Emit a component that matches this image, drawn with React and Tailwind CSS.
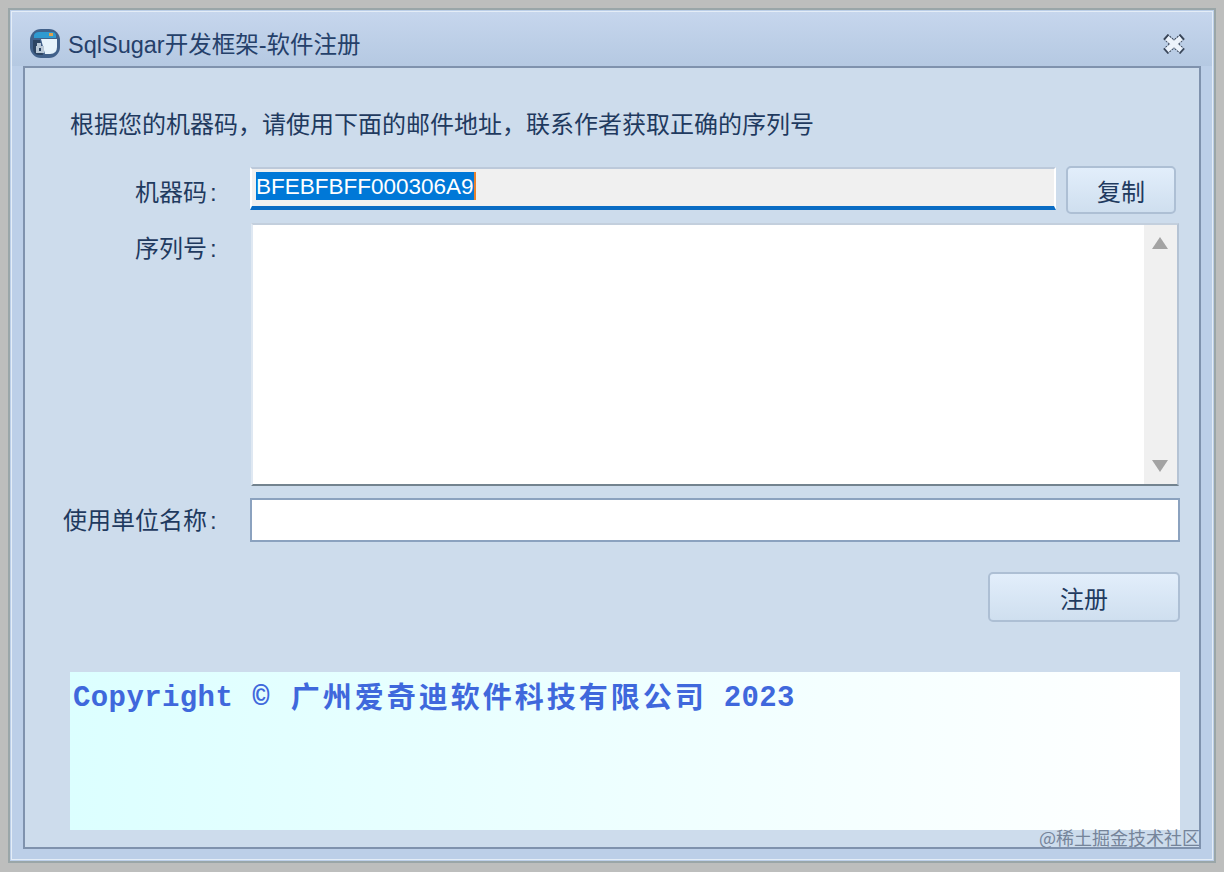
import React from "react";

const cjk = "font-['Liberation_Sans','Noto_Sans_CJK_SC',sans-serif]";

const AppIcon = () => (
  <svg width="32" height="31" viewBox="0 0 32 31" className="mb-[6px] blur-[0.5px]">
    <rect x="1" y="1" width="30" height="29" rx="11" fill="#41618a" />
    <path d="M5 7 Q6 4 10 4 H23 Q27 4 27 8 V10 H5 Z" fill="#2f9ad0" />
    <rect x="20" y="5" width="4" height="3" fill="#dfa24e" />
    <path d="M12 11 H28 V19 Q28 26 21 26 H16 Z" fill="#e6f3fb" />
    <path d="M4 12 H11 L14 27 H9 Q4 26 4 20 Z" fill="#2c4462" />
    <path d="M8 15 H12 V18 H15 V25 H7 V18 H8 Z" fill="#b9c8d6" />
    <rect x="10" y="20" width="2" height="3" fill="#2c4462" />
  </svg>
);

const CloseIcon = () => (
  <svg width="24" height="20" viewBox="0 0 24 20" className="mb-[4px]">
    <path
      d="M3.5 2.5 L20.5 17.5 M20.5 2.5 L3.5 17.5"
      stroke="#3a4658"
      strokeWidth="7"
      strokeDasharray="2 1"
      fill="none"
    />
    <path d="M5 4 L19 16 M19 4 L5 16" stroke="#edf3fb" strokeWidth="5" fill="none" />
  </svg>
);

const Button = ({ className, children }) => (
  <button
    className={`rounded-[5px] border-2 border-[#adbfd4] bg-linear-to-b from-[#e2eefb] to-[#cfdfef] pt-[6px] text-[24px] text-[#1f3a5f] ${cjk} ${className}`}
  >
    {children}
  </button>
);

const Label = ({ children, className }) => (
  <div
    className={`w-[225px] shrink-0 pr-[32px] text-right text-[24px] leading-[32px] text-[#1f3a5f] ${cjk} ${className}`}
  >
    {children}
    <span className="inline-block w-[11px] pl-[3px] text-left">:</span>
  </div>
);

export default function App() {
  return (
    <div className="h-[872px] w-[1224px] overflow-hidden bg-[#bdbebd] pt-[8px] pl-[8px]">
      <div className="relative h-[855px] w-[1208px] border-2 border-[#9aa6a8] bg-[#bccfe8] p-[1px]">
        <div className="h-full border border-[#e4edf7]">
          {/* title bar */}
          <div className="flex h-[54px] items-center justify-between bg-linear-to-b from-[#c6d6ed] to-[#b5c9e2] pt-[14px] pr-[26px] pl-[17px]">
            <div className="flex items-center gap-[7px]">
              <AppIcon />
              <span className={`text-[23.5px] text-[#25406a] ${cjk}`}>SqlSugar开发框架-软件注册</span>
            </div>
            <CloseIcon />
          </div>

          {/* panel */}
          <div className="mx-[11px] flex h-[783px] flex-col border-2 border-[#7f92ad] bg-[#cddcec]">
            <div className={`mt-[41px] pl-[45px] text-[24px] leading-[32px] text-[#1f3a5f] ${cjk}`}>
              根据您的机器码，请使用下面的邮件地址，联系作者获取正确的序列号
            </div>

            <div className="mt-[25px] flex items-start">
              <Label className="mt-[11px]">机器码</Label>
              <div className="mt-[1px] flex h-[43px] w-[806px] items-start border-x-2 border-t-2 border-b-[4px] border-x-white border-t-[#bcc9da] border-b-[#0a6cc4] bg-[#f0f0f0] pt-[3px] pl-[4px]">
                <span className="h-[28px] border-r-2 border-[#e8822e] bg-[#0078d7] font-['Liberation_Sans',sans-serif] text-[22.5px] leading-[30px] text-white">
                  BFEBFBFF000306A9
                </span>
              </div>
              <Button className="ml-[10px] h-[48px] w-[110px]">复制</Button>
            </div>

            <div className="mt-[9px] flex items-start">
              <Label className="mt-[10px]">序列号</Label>
              <div className="ml-[1px] flex h-[263px] w-[928px] border-t-2 border-r-2 border-b-2 border-l-2 border-t-[#c3cfdd] border-r-[#b5c3d4] border-b-[#73838f] border-l-[#dfe8f2] bg-white">
                <div className="flex-1" />
                <div className="flex w-[33px] flex-col items-center justify-between bg-[#f0f0f0] py-[12px] pr-[2px]">
                  <div className="h-0 w-0 border-x-[8px] border-b-[12px] border-x-transparent border-b-[#a3a3a3]" />
                  <div className="h-0 w-0 border-x-[8px] border-t-[12px] border-x-transparent border-t-[#a3a3a3]" />
                </div>
              </div>
            </div>

            <div className="mt-[12px] flex items-center">
              <Label className="pt-[2px]">使用单位名称</Label>
              <div className="h-[44px] w-[930px] border-2 border-[#8ba2bf] bg-white" />
            </div>

            <div className="mt-[30px] flex justify-end pr-[19px]">
              <Button className="h-[50px] w-[192px]">注册</Button>
            </div>

            <div className="mt-[50px] ml-[45px] h-[158px] w-[1110px] bg-linear-to-r from-[#dcffff] to-white pt-[5px] pl-[3px] text-[#3f68dc]">
              <div className="flex items-center whitespace-nowrap font-bold">
                <span className="font-['Liberation_Mono',monospace] text-[29px] leading-[36px] tracking-[0.4px]">
                  Copyright
                </span>
                <span className="ml-[19px] font-['Liberation_Mono',monospace] text-[29px] leading-[36px]">©</span>
                <span className="ml-[21px] pb-[8px] font-['Noto_Sans_CJK_SC',sans-serif] text-[29px] leading-[36px] tracking-[3px]">
                  广州爱奇迪软件科技有限公司
                </span>
                <span className="ml-[17px] font-['Liberation_Mono',monospace] text-[29px] leading-[36px] tracking-[0.4px]">
                  2023
                </span>
              </div>
            </div>
          </div>
        </div>

        {/* watermark */}
        <span className="absolute right-[14px] bottom-[13px] font-['Noto_Sans_CJK_SC',sans-serif] text-[18px] leading-[22px] text-[#75849a]">
          @稀土掘金技术社区
        </span>
      </div>
    </div>
  );
}
